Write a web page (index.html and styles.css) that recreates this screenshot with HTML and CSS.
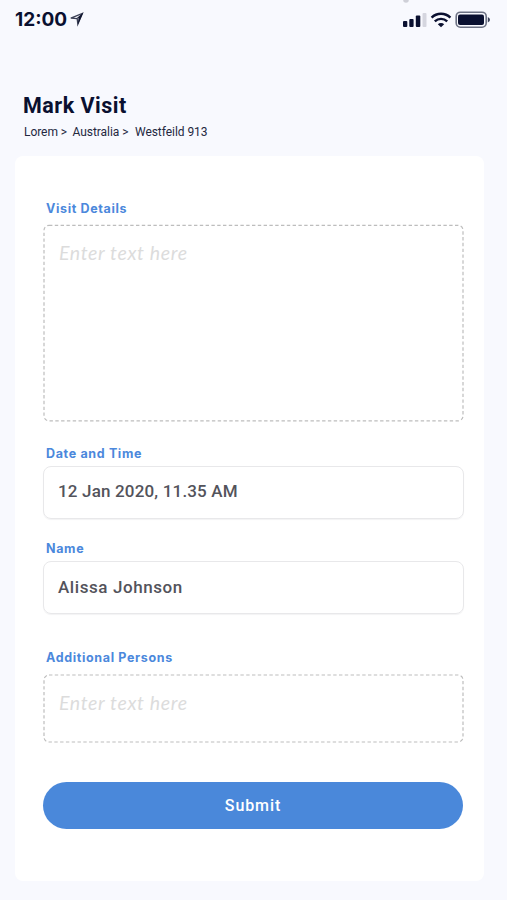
FILE: index.html
```html
<!DOCTYPE html>
<html lang="en">
<head>
<meta charset="utf-8">
<title>Mark Visit</title>
<link rel="stylesheet" href="styles.css">
</head>
<body>
<header class="status">
  <span class="clock">12:00</span>
  <svg class="location" width="14" height="15" viewBox="0 0 14 15"><path fill="none" stroke="#3a3f55" stroke-width="1.3" d="M0.8 6.2 L12.4 1.4 L7.8 12.2 L7.2 6.6 Z"/><path fill="#10152f" d="M6 6.8 L13.4 0.6 L8 12.6 L8.4 5.8 Z"/></svg>
  <svg class="signals" width="90" height="28" viewBox="0 0 90 28">
    <circle cx="6" cy="0" r="2.8" fill="#cfd0d8"/>
    <g fill="#0a1030">
      <rect x="3" y="21" width="4.3" height="6" rx="1"/>
      <rect x="9.3" y="19" width="4.3" height="8" rx="1"/>
      <rect x="15.8" y="15.5" width="4.5" height="11.5" rx="1"/>
      <path d="M37.8 24.3 a4.5 4.5 0 0 1 6.4 0 L41 27.3 Z"/>
      <rect x="58" y="14.5" width="26" height="10.5" rx="2"/>
    </g>
    <rect x="22.5" y="13" width="4" height="14" rx="1" fill="#d5d6df"/>
    <g fill="none" stroke="#0a1030" stroke-width="2.4"><path d="M31.6 17.6 a13.4 13.4 0 0 1 18.8 0"/><path d="M34.8 21.4 a9 9 0 0 1 12.4 0"/></g>
    <rect x="56.2" y="12.2" width="30" height="15" rx="4.2" fill="none" stroke="#6d7284" stroke-width="1.6"/>
    <path d="M87.8 17 q2.2 1 2.2 2.7 t-2.2 2.7z" fill="#3c425a"/>
  </svg>
</header>
<main>
  <h1><span>Mark Visit</span></h1>
  <nav class="crumbs"><span class="c1">Lorem &gt;</span><span class="c2">Australia &gt;</span><span class="c3">Westfeild 913</span></nav>
  <form class="card">
    <div class="label l1">Visit Details</div>
    <div class="area tall"><svg class="outline" width="421" height="198"><rect x="1" y="1.3" width="419" height="195.6" rx="5"/></svg><span class="hint">Enter text here</span></div>
    <div class="label l2">Date and Time</div>
    <div class="field"><span class="v1">12 Jan 2020, 11.35 AM</span></div>
    <div class="label l3">Name</div>
    <div class="field name"><span class="v2">Alissa Johnson</span></div>
    <div class="label l4">Additional Persons</div>
    <div class="area short"><svg class="outline" width="421" height="69"><rect x="1" y="1" width="419" height="67" rx="5"/></svg><span class="hint">Enter text here</span></div>
    <button type="button" class="submit"><span>Submit</span></button>
  </form>
</main>
</body>
</html>
```
FILE: styles.css
```css
* { box-sizing: border-box; }
body { margin: 0; height: 900px; overflow: hidden; background: #f8f9fe; font-family: Roboto, sans-serif; color: #0a1030; }
.status { display: flex; height: 40px; padding-left: 15px; }
.clock { width: 52px; margin-top: 8px; font: 700 19px/24px Inter, sans-serif; white-space: nowrap; }
.location { margin: 12px 0 0 3px; }
.signals { margin-left: 316px; }
h1 { margin: 0; padding: 53px 0 0 23px; font: 700 21.5px/26px Roboto, sans-serif; letter-spacing: 0.5px; }
.crumbs { display: flex; height: 37px; padding: 4px 0 0 24px; font-size: 12px; line-height: 18px; letter-spacing: -0.05px; white-space: nowrap; color: #24283f; }
.c1 { width: 48.5px; }
.c2 { width: 62.5px; }
.card { width: 469px; height: 725px; margin-left: 15px; padding: 44px 21px 0 28px; border-radius: 8px; background: #fff; }
.label { height: 18px; padding-left: 3px; font: 700 12.5px/18px Inter, sans-serif; letter-spacing: 0.65px; color: #4b88dc; white-space: nowrap; }
.area { display: grid; width: 421px; }
.tall { height: 198px; margin-top: 6px; }
.short { height: 69px; margin-top: 7px; }
.outline { grid-area: 1 / 1; }
.outline rect { fill: none; stroke: #bdbdbd; stroke-width: 1.2; stroke-dasharray: 3.4 2.4; }
.hint { grid-area: 1 / 1; padding: 16px 0 0 16px; font: italic 400 19.5px/25px Lato, sans-serif; letter-spacing: 0.65px; color: #dcdcdc; }
.l2 { margin-top: 23px; }
.field { width: 421px; height: 53px; margin-top: 3px; padding: 12px 14px; border: 1.5px solid #e8e8ea; border-radius: 8px; font-size: 17px; font-weight: 500; line-height: 24px; color: #53535b; box-shadow: 0 1px 1px #f3f3f4; }
.name { padding-top: 13px; }
.v1 { letter-spacing: 0.17px; }
.v2 { letter-spacing: 0.58px; }
.l3 { margin-top: 21px; }
.l4 { margin-top: 35px; }
.submit { display: block; width: 420px; height: 47px; margin-top: 39px; padding: 0; border: 0; border-radius: 24px; background: #4a88da; color: #fff; font: 500 16px/48px Roboto, sans-serif; letter-spacing: 0.9px; }
```
